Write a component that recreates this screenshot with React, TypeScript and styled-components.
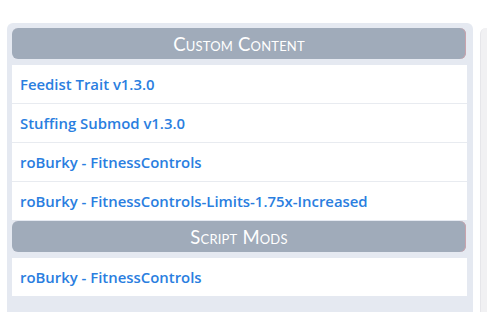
import React from "react";
import styled, { createGlobalStyle } from "styled-components";

const Global = createGlobalStyle`
  html, body { margin: 0; padding: 0; background: #ffffff; }
  body { font-family: "Open Sans", "Lato", sans-serif; }
`;

const Page = styled.div`
  display: flex;
  gap: 7px;
  padding: 23px 0 0 7px;
  height: 312px;
  box-sizing: border-box;
  overflow: hidden;
`;

const Panel = styled.section`
  flex: 0 0 466px;
  background: #e5e9f1;
  border-radius: 6px 6px 0 0;
  padding: 5px 7px 0 5px;
  box-sizing: border-box;
  display: flex;
  flex-direction: column;
`;

const SidePanel = styled.section`
  flex: 1 0 20px;
  margin-top: 5px;
  background: #f1f1f3;
  border-radius: 6px 0 0 0;
  border-left: 1px solid #e6e6ea;
`;

const Header = styled.h2<{ $first?: boolean }>`
  margin: ${(p) => (p.$first ? "0" : "1px")} 0 6px 0;
  height: 31px;
  background: #a0abba;
  border-radius: 6px;
  box-shadow: inset -1px 0 0 #c9a3ad;
  color: #ffffff;
  font-family: "Lato", sans-serif;
  font-weight: 400;
  font-size: 18.5px;
  font-variant: small-caps;
  letter-spacing: 0.2px;
  display: flex;
  align-items: center;
  justify-content: center;
`;

const List = styled.ul`
  list-style: none;
  margin: 0 -1px 0 0;
  padding: 0;
  background: #ffffff;
`;

const Item = styled.li`
  height: 38px;
  padding: 0 8px;
  display: flex;
  align-items: center;
  border-top: 1px solid #e8ebf0;
  color: #2a7ee0;
  font-family: "Open Sans", sans-serif;
  font-weight: 600;
  font-size: 14.9px;
  &:first-child { border-top: none; }
`;

const sections = [
  {
    title: "Custom Content",
    items: [
      "Feedist Trait v1.3.0",
      "Stuffing Submod v1.3.0",
      "roBurky - FitnessControls",
      "roBurky - FitnessControls-Limits-1.75x-Increased",
    ],
  },
  { title: "Script Mods", items: ["roBurky - FitnessControls"] },
];

export default function App() {
  return (
    <>
      <Global />
      <Page>
        <Panel>
          {sections.map((s, i) => (
            <React.Fragment key={s.title}>
              <Header $first={i === 0}>{s.title}</Header>
              <List>
                {s.items.map((it) => (
                  <Item key={it}>{it}</Item>
                ))}
              </List>
            </React.Fragment>
          ))}
        </Panel>
        <SidePanel />
      </Page>
    </>
  );
}
